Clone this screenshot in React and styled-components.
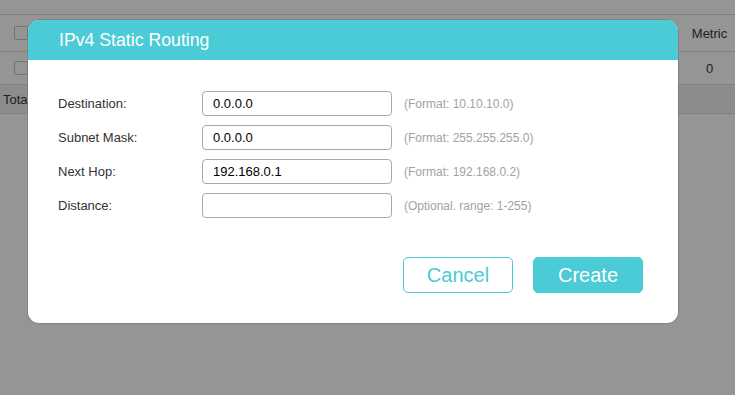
import styled, { createGlobalStyle } from "styled-components";

const GlobalStyle = createGlobalStyle`
  html, body {
    margin: 0;
    padding: 0;
    background: #ffffff;
    font-family: "Liberation Sans", Arial, sans-serif;
  }
`;

const fields = [
  { label: "Destination:", value: "0.0.0.0", hint: "(Format: 10.10.10.0)" },
  { label: "Subnet Mask:", value: "0.0.0.0", hint: "(Format: 255.255.255.0)" },
  { label: "Next Hop:", value: "192.168.0.1", hint: "(Format: 192.168.0.2)" },
  { label: "Distance:", value: "", hint: "(Optional. range: 1-255)" },
];

function App() {
  return (
    <Page>
      <GlobalStyle />
      <Table>
        <thead>
          <tr>
            <CheckCell>
              <Check />
            </CheckCell>
            <Cell />
            <MetricCell>Metric</MetricCell>
          </tr>
        </thead>
        <tbody>
          <tr>
            <CheckCell>
              <Check />
            </CheckCell>
            <Cell />
            <MetricCell>0</MetricCell>
          </tr>
          <TotalRow>
            <Cell colSpan={3}>Total: 1</Cell>
          </TotalRow>
        </tbody>
      </Table>
      <Overlay />
      <Modal>
        <Header>IPv4 Static Routing</Header>
        <Body>
          <Form>
            {fields.map((f) => (
              <Row key={f.label}>
                <Label>{f.label}</Label>
                <Input defaultValue={f.value} />
                <Hint>{f.hint}</Hint>
              </Row>
            ))}
          </Form>
          <Actions>
            <Button>Cancel</Button>
            <Button primary>Create</Button>
          </Actions>
        </Body>
      </Modal>
    </Page>
  );
}

const Page = styled.div`
  position: relative;
  width: 735px;
  height: 395px;
  overflow: hidden;
  padding-top: 14px;
  box-sizing: border-box;
`;

const Table = styled.table`
  width: 100%;
  border-collapse: collapse;
  border-top: 1px solid #d8d8d8;
  font-size: 13px;
  color: #333a48;
`;

const Cell = styled.td`
  height: 32px;
  padding: 0 3px;
  border-bottom: 1px solid #dcdcdc;
  text-align: left;
`;

const CheckCell = styled(Cell)`
  width: 22px;
  padding-left: 14px;
  height: 36px;
  tbody & {
    height: 32px;
  }
`;

const MetricCell = styled(Cell)`
  width: 45px;
  text-align: center;
`;

const TotalRow = styled.tr`
  background: #f0f0f0;
  td {
    height: 28px;
  }
`;

const Check = styled.span`
  display: block;
  width: 12px;
  height: 12px;
  border: 1px solid #c4c4c4;
  border-radius: 2px;
  background: #fff;
`;

const Overlay = styled.div`
  position: absolute;
  inset: 0;
  background: rgba(0, 0, 0, 0.415);
`;

const Modal = styled.div`
  position: absolute;
  left: 28px;
  top: 20px;
  width: 650px;
  height: 303px;
  background: #fff;
  border-radius: 11px;
  overflow: hidden;
  box-shadow: 0 0 0 1px rgba(120, 120, 120, 0.6);
  display: flex;
  flex-direction: column;
`;

const Header = styled.div`
  height: 40px;
  background: #4acbd6;
  color: #fff;
  font-size: 17.7px;
  line-height: 41px;
  padding-left: 31px;
`;

const Body = styled.div`
  flex: 1;
  display: flex;
  flex-direction: column;
  padding: 31px 35px 0 30px;
`;

const Form = styled.div`
  display: flex;
  flex-direction: column;
  gap: 9px;
`;

const Row = styled.div`
  display: flex;
  align-items: center;
  height: 25px;
`;

const Label = styled.span`
  width: 144px;
  font-size: 13px;
  color: #333;
`;

const Input = styled.input`
  box-sizing: border-box;
  width: 190px;
  height: 25px;
  border: 1px solid #a9a9a9;
  border-radius: 4px;
  padding: 0 10px;
  font-family: "Liberation Sans", Arial, sans-serif;
  font-size: 13px;
  color: #000;
  outline: none;
`;

const Hint = styled.span`
  margin-left: 12px;
  font-size: 12px;
  color: #a2a2a2;
`;

const Actions = styled.div`
  display: flex;
  justify-content: flex-end;
  gap: 20px;
  margin-top: 39px;
`;

const Button = styled.button`
  box-sizing: border-box;
  width: 110px;
  height: 36px;
  border-radius: 5px;
  border: 1px solid #4acbd6;
  background: ${(p) => (p.primary ? "#4acbd6" : "#fff")};
  color: ${(p) => (p.primary ? "#fff" : "#4acbd6")};
  font-family: "Liberation Sans", Arial, sans-serif;
  font-size: 20px;
  cursor: pointer;
`;

export default App;
